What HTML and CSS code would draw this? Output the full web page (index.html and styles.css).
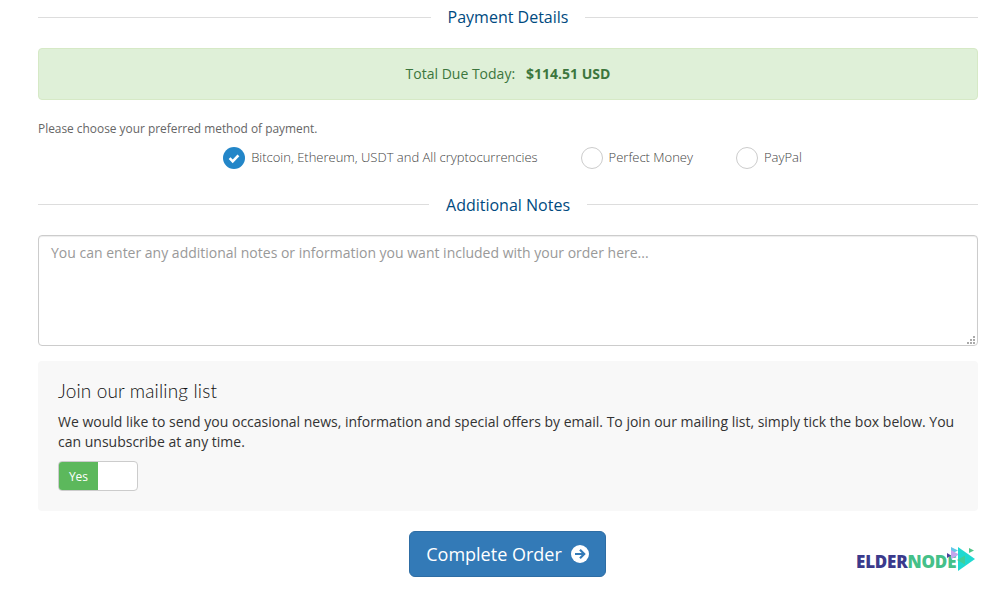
FILE: index.html
```html
<!DOCTYPE html>
<html lang="en">
<head>
<meta charset="utf-8">
<title>Checkout</title>
<link rel="stylesheet" href="styles.css">
</head>
<body>
<main class="page">
  <div class="sub-heading first"><span>Payment Details</span></div>
  <div class="alert"><span class="alert-label">Total Due Today:</span> <strong>$114.51 USD</strong></div>
  <p class="choose">Please choose your preferred method of payment.</p>
  <div class="gateways">
    <label class="gateway"><span class="radio checked"><svg viewBox="0 0 22 22" width="22" height="22"><path d="M6.600 11.200l3.100 3.100 5.700-5.900" fill="none" stroke="#fff" stroke-width="2.600"/></svg></span>Bitcoin, Ethereum, USDT and All cryptocurrencies</label>
    <label class="gateway"><span class="radio"></span>Perfect Money</label>
    <label class="gateway"><span class="radio"></span>PayPal</label>
  </div>
  <div class="sub-heading notes"><span>Additional Notes</span></div>
  <div class="notes-wrap">
    <textarea class="notes-box" placeholder="You can enter any additional notes or information you want included with your order here..."></textarea>
    <svg class="grip" viewBox="0 0 9 9" width="9" height="9"><path d="M7 0h2v2H7zM4 3h2v2H4zM7 3h2v2H7zM1 6h2v2H1zM4 6h2v2H4zM7 6h2v2H7z" fill="#aaa"/></svg>
  </div>
  <section class="mailing">
    <h4>Join our mailing list</h4>
    <p>We would like to send you occasional news, information and special offers by email. To join our mailing list, simply tick the box below. You can unsubscribe at any time.</p>
    <div class="toggle"><span class="toggle-on">Yes</span><span class="toggle-off"></span></div>
  </section>
  <div class="actions">
    <button class="complete" type="button">Complete Order
      <svg viewBox="0 0 18 18" width="18" height="18"><circle cx="9" cy="9" r="9" fill="#fff"/><path d="M4 9h9M9 4.800L13.200 9 9 13.200" fill="none" stroke="#337ab7" stroke-width="2.200"/></svg>
    </button>
  </div>
</main>
<div class="logo">
  <span class="logo-text"><span class="elder">ELDER</span><span class="node">NODE</span></span>
  <svg class="logo-mark" viewBox="0 0 32 26" width="32" height="26">
    <path d="M1 7l4 2.500-4 2.500z" fill="#4a3f9a"/>
    <path d="M5 1l7 3.500-7 3.500z" fill="#62c7e8"/>
    <path d="M5 4l8 4.500-8 4.500z" fill="#c3a6ec"/>
    <path d="M12 1l17 12-17 12z" fill="#1fd9d0"/>
    <path d="M19 9.500L11 14l8 4.500z" fill="#3fcf9a"/>
    <path d="M23 2l5 2.500-5 2.500z" fill="#4fc487"/>
  </svg>
</div>
</body>
</html>
```
FILE: styles.css
```css
* { box-sizing: border-box; }
html, body { margin: 0; padding: 0; background: #fff; }
body { font-family: "Open Sans", sans-serif; font-size: 14px; color: #333; height: 590px; overflow: hidden; position: relative; }
.page { padding: 0 7px 0 38px; }
.sub-heading { display: flex; align-items: center; color: #004a80; font-size: 16px; line-height: 22px; }
.sub-heading::before, .sub-heading::after { content: ""; flex: 1; height: 1px; background: #ddd; }
.sub-heading span { padding: 0 17px; }
.sub-heading.first { padding-top: 6px; }
.sub-heading.notes { margin-top: 23px; }
.sub-heading.notes span { padding-top: 2px; }
.alert { margin-top: 20px; height: 52px; display: flex; align-items: center; justify-content: center; gap: 11px; padding-bottom: 2px; background: #dff0d8; border: 1px solid #d6e9c6; border-radius: 4px; color: #3c763d; font-size: 14px; }
.alert strong { font-weight: 700; }
.choose { margin: 20px 0 0; font-size: 11.9px; line-height: 17px; color: #666; }
.gateways { display: flex; justify-content: center; gap: 43px; margin-top: 10px; padding-left: 9px; }
.gateway { display: flex; align-items: flex-start; gap: 6px; font-size: 13px; font-weight: 300; line-height: 20px; color: #444; }
.radio { width: 22px; height: 22px; border: 1px solid #ccc; border-radius: 50%; background: #fff; flex: none; display: block; }
.radio.checked { background: #2386c8; border: 0; }
.radio svg { display: block; }
.notes-wrap { position: relative; margin-top: 19px; }
.notes-box { display: block; width: 100%; height: 111px; padding: 7px 12px; border: 1px solid #ccc; border-radius: 4px; font: 14px/20px "Open Sans", sans-serif; color: #555; box-shadow: inset 0 1px 1px rgba(0,0,0,.075); resize: none; }
.notes-box::placeholder { color: #999; opacity: 1; }
.grip { position: absolute; right: 3px; bottom: 1px; }
.mailing { margin-top: 15px; height: 150px; padding: 20px; background: #f8f8f8; border-radius: 4px; }
.mailing h4 { margin: -1px 0 0; font-family: Lato, sans-serif; font-size: 19px; font-weight: 300; letter-spacing: .15px; line-height: 22px; color: #111; }
.mailing p { margin: 10px 0 0; font-size: 14px; line-height: 20px; color: #333; }
.toggle { display: flex; width: 80px; height: 30px; margin-top: 9px; border: 1px solid #ccc; border-radius: 4px; background: #fff; overflow: hidden; }
.toggle-on { width: 39px; background: #5cb85c; color: #fff; font-size: 12px; line-height: 30px; text-align: center; }
.actions { display: flex; justify-content: center; margin-top: 20px; padding-right: 1px; }
.complete { display: flex; align-items: center; gap: 9px; height: 46px; width: 197px; justify-content: center; padding: 0; background: #337ab7; border: 1px solid #2e6da4; border-radius: 6px; color: #fff; font: 18px/24px "Open Sans", sans-serif; }
.logo { position: absolute; left: 856px; top: 546px; width: 122px; height: 28px; }
.logo-text { position: absolute; left: 0; top: 5px; font: 800 17px/22px "Open Sans", sans-serif; letter-spacing: -.2px; white-space: nowrap; }
.elder { color: #3b3a8c; }
.node { color: #45c089; }
.logo-mark { position: absolute; left: 90px; top: 0; }
```
